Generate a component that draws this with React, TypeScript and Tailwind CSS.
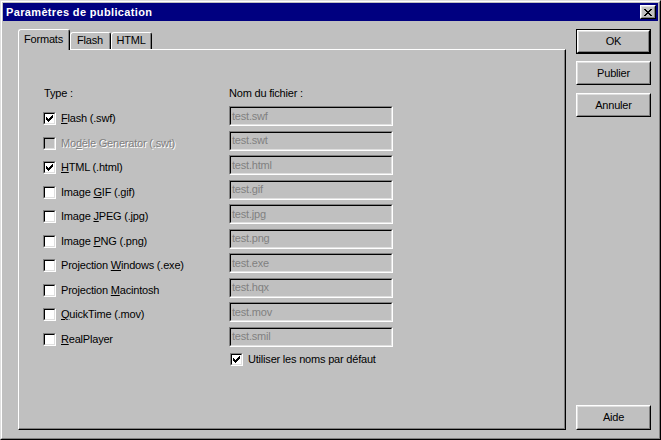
import React from 'react';

// Boîte de dialogue "Paramètres de publication" façon Windows 98

type Row = {
  text: string;
  u: number; // index de la lettre soulignée (raccourci)
  file: string;
  checked?: boolean;
  disabled?: boolean;
};

const rows: Row[] = [
  { text: 'Flash (.swf)', u: 0, file: 'test.swf', checked: true },
  { text: 'Modèle Generator (.swt)', u: 2, file: 'test.swt', disabled: true },
  { text: 'HTML (.html)', u: 0, file: 'test.html', checked: true },
  { text: 'Image GIF (.gif)', u: 6, file: 'test.gif' },
  { text: 'Image JPEG (.jpg)', u: 6, file: 'test.jpg' },
  { text: 'Image PNG (.png)', u: 6, file: 'test.png' },
  { text: 'Projection Windows (.exe)', u: 11, file: 'test.exe' },
  { text: 'Projection Macintosh', u: 11, file: 'test.hqx' },
  { text: 'QuickTime (.mov)', u: 0, file: 'test.mov' },
  { text: 'RealPlayer', u: 0, file: 'test.smil' },
];

function Accel({ text, u }: { text: string; u: number }) {
  return (
    <>
      {text.slice(0, u)}
      <span className="underline underline-offset-[1px]">{text.charAt(u)}</span>
      {text.slice(u + 1)}
    </>
  );
}

function CheckMark() {
  return (
    <svg width="7" height="7" viewBox="0 0 7 7" shapeRendering="crispEdges">
      <path
        fill="#000"
        d="M6 0h1v3h-1zM5 1h1v3h-1zM4 2h1v3h-1zM3 3h1v3h-1zM2 4h1v3h-1zM1 3h1v3h-1zM0 2h1v3h-1z"
      />
    </svg>
  );
}

function Checkbox({ checked, disabled }: { checked?: boolean; disabled?: boolean }) {
  return (
    <div className="w-[13px] h-[13px] shrink-0 border border-t-[#808080] border-l-[#808080] border-r-white border-b-white">
      <div
        className={`w-full h-full border border-t-black border-l-black border-r-[#dfdfdf] border-b-[#dfdfdf] flex items-center justify-center ${
          disabled ? 'bg-[#c0c0c0]' : 'bg-white'
        }`}
      >
        {checked && <CheckMark />}
      </div>
    </div>
  );
}

function Field({ value }: { value: string }) {
  return (
    <div className="w-[164px] h-[20px] border border-t-[#808080] border-l-[#808080] border-r-white border-b-white">
      <div className="w-full h-full border border-t-black border-l-black border-r-[#dfdfdf] border-b-[#dfdfdf] bg-[#c0c0c0] flex items-center pl-[1px] text-[#808080] leading-[13px]">
        {value}
      </div>
    </div>
  );
}

function Button({ label, isDefault, className = '' }: { label: string; isDefault?: boolean; className?: string }) {
  const bevel = (
    <div className="w-full h-full border border-t-white border-l-white border-r-black border-b-black">
      <div className="w-full h-full border border-t-[#dfdfdf] border-l-[#dfdfdf] border-r-[#808080] border-b-[#808080] flex items-center justify-center leading-[13px]">
        {label}
      </div>
    </div>
  );
  return (
    <div className={`w-[75px] ${className}`}>
      {isDefault ? <div className="w-full h-full border border-black">{bevel}</div> : bevel}
    </div>
  );
}

function Tab({ label, active, width }: { label: string; active?: boolean; width: string }) {
  return (
    <div
      className={`${width} ${
        active ? 'h-[21px] -mb-px relative z-10' : 'h-[17px]'
      } bg-[#c0c0c0] border-t border-l border-r border-t-white border-l-white border-r-black rounded-t-[3px]`}
    >
      <div
        className={`h-full border-r border-r-[#808080] flex justify-center leading-[13px] ${
          active ? 'pt-[3px]' : 'pt-[1px]'
        }`}
      >
        {label}
      </div>
    </div>
  );
}

function CloseIcon() {
  return (
    <svg width="8" height="7" viewBox="0 0 8 7" shapeRendering="crispEdges">
      <path
        fill="#000"
        d="M0 0h2v1h-2zM6 0h2v1h-2zM1 1h2v1h-2zM5 1h2v1h-2zM2 2h4v1h-4zM3 3h2v1h-2zM2 4h4v1h-4zM1 5h2v1h-2zM5 5h2v1h-2zM0 6h2v1h-2zM6 6h2v1h-2z"
      />
    </svg>
  );
}

export default function App() {
  return (
    <div className="w-[661px] h-[440px] bg-[#c0c0c0] border border-t-[#dfdfdf] border-l-[#dfdfdf] border-r-black border-b-black font-['Liberation_Sans',Arial,sans-serif] text-[11px] tracking-[-0.2px] text-black select-none">
      <div className="w-full h-full border border-t-white border-l-white border-r-[#808080] border-b-[#808080] p-px flex flex-col">
        {/* barre de titre */}
        <div className="h-[18px] bg-[#000080] flex items-center justify-between pl-[3px] pr-[2px]">
          <span className="text-white font-bold leading-[13px] tracking-[0.35px]">Paramètres de publication</span>
          <div className="w-[16px] h-[14px] border border-t-white border-l-white border-r-black border-b-black bg-[#c0c0c0]">
            <div className="w-full h-full border border-t-[#dfdfdf] border-l-[#dfdfdf] border-r-[#808080] border-b-[#808080] flex items-center justify-center">
              <CloseIcon />
            </div>
          </div>
        </div>

        {/* contenu */}
        <div className="flex-1 flex pl-[15px] pt-[8px] pb-[7px] gap-[10px]">
          <div className="w-[548px] flex flex-col">
            <div className="flex items-end h-[20px]">
              <Tab label="Formats" active width="w-[52px]" />
              <Tab label="Flash" width="w-[41px]" />
              <Tab label="HTML" width="w-[41px]" />
            </div>
            <div className="flex-1 border border-t-white border-l-white border-r-black border-b-black">
              <div className="h-full border-r border-b border-r-[#808080] border-b-[#808080] pl-[24px] pt-[37px]">
                <div className="flex leading-[13px] h-[13px]">
                  <div className="w-[186px] pl-px">Type :</div>
                  <div>Nom du fichier :</div>
                </div>
                <div className="mt-[6px] flex flex-col gap-[4.5px]">
                  {rows.map((r) => (
                    <div key={r.file} className="flex h-[20px]">
                      <div className="w-[186px] h-[20px] pt-[6px]">
                        <div className="flex items-center gap-[5px] h-[13px]">
                          <Checkbox checked={r.checked} disabled={r.disabled} />
                          <span
                            className={`leading-[13px] whitespace-nowrap ${
                              r.disabled ? 'text-[#808080] [text-shadow:1px_1px_0_#fff]' : ''
                            }`}
                          >
                            <Accel text={r.text} u={r.u} />
                          </span>
                        </div>
                      </div>
                      <Field value={r.file} />
                    </div>
                  ))}
                </div>
                <div className="mt-[6px] ml-[187px] flex items-center gap-[5px] h-[13px]">
                  <Checkbox checked />
                  <span className="leading-[13px]">Utiliser les noms par défaut</span>
                </div>
              </div>
            </div>
          </div>

          <div className="w-[75px] flex flex-col">
            <Button label="OK" isDefault className="h-[25px]" />
            <Button label="Publier" className="h-[24px] mt-[7px]" />
            <Button label="Annuler" className="h-[24px] mt-[8px]" />
            <Button label="Aide" className="h-[25px] mt-auto" />
          </div>
        </div>
      </div>
    </div>
  );
}
